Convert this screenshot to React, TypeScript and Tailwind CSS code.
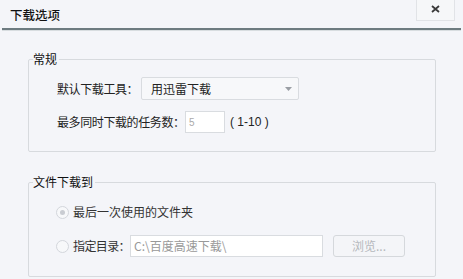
import React from "react";

const font = { fontFamily: '"Noto Sans CJK SC", "Noto Sans", sans-serif' };

function Radio({ checked }: { checked?: boolean }) {
  return (
    <span className="relative flex h-[13px] w-[13px] shrink-0 items-center justify-center rounded-full border border-[#d3d6dc] bg-[#f7f8fa]">
      {checked && <span className="h-[5px] w-[5px] rounded-full bg-[#c9ccd2]" />}
    </span>
  );
}

export default function App() {
  return (
    <div
      className="relative h-[279px] w-[463px] overflow-hidden bg-[#f4f5f9] text-[12px] text-[#222]"
      style={font}
    >
      {/* title bar */}
      <div className="flex h-[28px] items-start justify-between">
        <div className="pl-[10px] pt-[6px] text-[12.5px] font-medium text-[#111]">下载选项</div>
        <div className="mr-[8px] flex h-[21px] w-[39px] items-center justify-center border-b border-l border-r border-[#e1e3e7] bg-[#f6f7f9] pb-[2px] text-[#333]">
          <svg width="9" height="8" viewBox="0 0 9 8">
            <path d="M1 1 L8 7 M8 1 L1 7" stroke="#3a3a3a" strokeWidth="1.8" />
          </svg>
        </div>
      </div>
      <div className="mx-[2px] h-[2px] bg-[#6d7b80]" />
      <div className="mx-[2px] h-[1px] bg-[#d8dde0]" />

      <div className="flex flex-col gap-[30px] pl-[28px] pr-[27px] pt-[28px]">
        {/* group 1 */}
        <div className="relative h-[93px] rounded-[2px] border border-[#d7dade]">
          <span className="absolute left-[4px] top-[-8px] bg-[#f4f5f9] pr-[2px] leading-[14px] text-[#111]">常规</span>
          <div className="flex flex-col gap-[11px] pl-[28px] pt-[17px]">
            <div className="flex h-[23px] items-center">
              <span className="w-[84px] whitespace-nowrap tracking-[-0.4px]">默认下载工具：</span>
              <div className="flex h-[23px] w-[158px] items-center justify-between rounded-[2px] border border-[#d9dce0] bg-[#f7f8fa] pl-[9px] pr-[6px]">
                <span>用迅雷下载</span>
                <svg width="7" height="4" viewBox="0 0 7 4">
                  <path d="M0 0 L7 0 L3.5 4 Z" fill="#9a9ea4" />
                </svg>
              </div>
            </div>
            <div className="flex h-[22px] items-center">
              <span className="w-[128px] whitespace-nowrap tracking-[-0.4px]">最多同时下载的任务数：</span>
              <div className="flex h-[22px] w-[40px] items-center border border-[#d9dce0] bg-white pl-[3px] text-[10px] text-[#aaa]" style={{ fontFamily: '"Liberation Sans", sans-serif' }}>
                5
              </div>
              <span className="ml-[5px] whitespace-nowrap" style={{ fontFamily: '"Liberation Sans", sans-serif' }}>( 1-10 )</span>
            </div>
          </div>
        </div>

        {/* group 2 */}
        <div className="relative h-[95px] rounded-[2px] border border-[#d7dade]">
          <span className="absolute left-[4px] top-[-8px] bg-[#f4f5f9] pr-[2px] leading-[14px] text-[#111]">文件下载到</span>
          <div className="flex flex-col gap-[15px] pl-[27px] pt-[21px]">
            <div className="flex h-[16px] items-center gap-[4px]">
              <Radio checked />
              <span className="whitespace-nowrap text-[#333]">最后一次使用的文件夹</span>
            </div>
            <div className="flex h-[22px] items-center">
              <Radio />
              <span className="ml-[4px] w-[57px] whitespace-nowrap tracking-[-0.6px] text-[#333]">指定目录：</span>
              <div className="flex h-[22px] w-[193px] items-center whitespace-nowrap border border-[#d9dce0] bg-white pl-[3px] text-[#999]">
                C:\百度高速下载\
              </div>
              <div className="ml-[10px] flex h-[22px] w-[72px] items-center justify-center whitespace-nowrap rounded-[3px] border border-[#d5d8dc] bg-[#f4f5f8] text-[#b5b8bc]">
                浏览...
              </div>
            </div>
          </div>
        </div>
      </div>
    </div>
  );
}
